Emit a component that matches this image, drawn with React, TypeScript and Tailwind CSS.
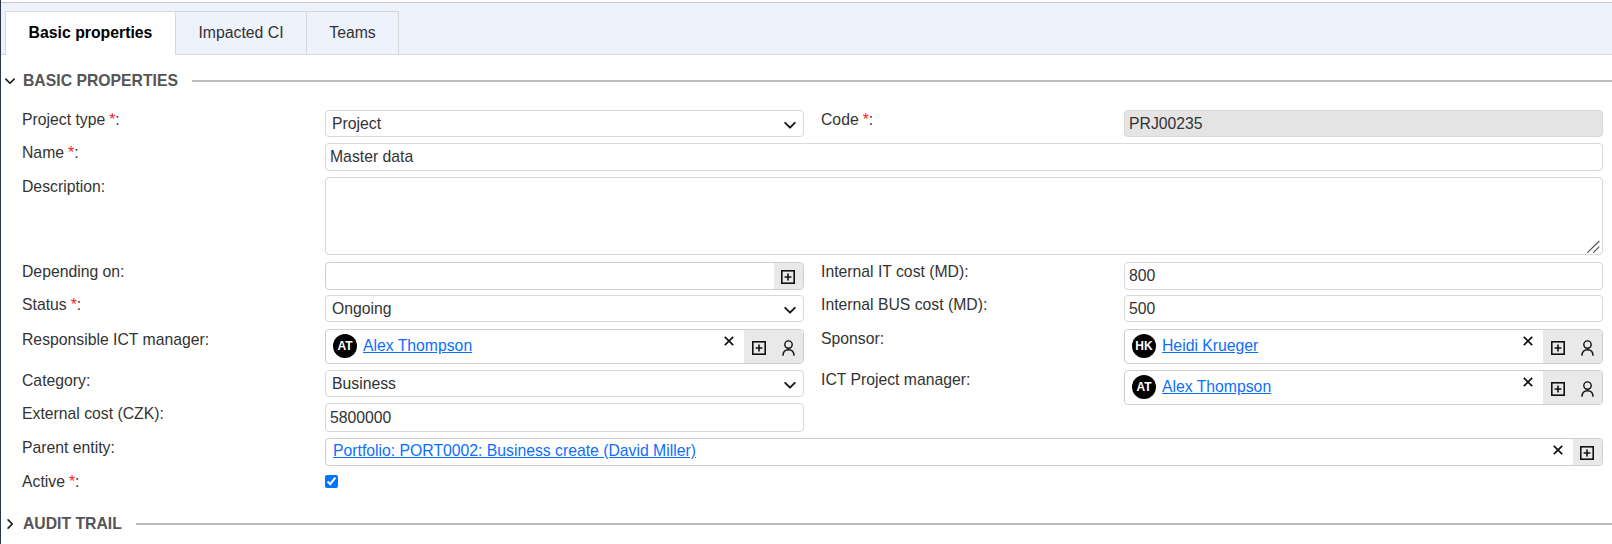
import React from "react";

const font = { fontFamily: '"Liberation Sans", Arial, sans-serif' };

function Chevron({ className = "", w = 2 }: { className?: string; w?: number }) {
  return (
    <svg viewBox="0 0 16 16" className={className} fill="none" stroke="#1a1a1a" strokeWidth={w} strokeLinecap="round" strokeLinejoin="round">
      <path d="M2.5 5.5 8 11l5.5-5.5" />
    </svg>
  );
}
function PlusBox() {
  return (
    <svg viewBox="0 0 14 14" width="14" height="14" fill="none" stroke="#111" strokeWidth="1.6">
      <rect x="0.8" y="0.8" width="12.4" height="12.4" />
      <path d="M7 3.6v6.8M3.6 7h6.8" />
    </svg>
  );
}
function Person() {
  return (
    <svg viewBox="0 0 13 16" width="13" height="16" fill="none" stroke="#111" strokeWidth="1.4">
      <circle cx="6.5" cy="4.6" r="3.7" />
      <path d="M1 15.8c0-3.8 2.2-6 5.5-6s5.5 2.2 5.5 6" />
    </svg>
  );
}
function Cross() {
  return (
    <svg viewBox="0 0 10 10" width="10" height="10" fill="none" stroke="#111" strokeWidth="1.7">
      <path d="M.8.8l8.4 8.4M9.2.8.8 9.2" />
    </svg>
  );
}
function Label({ text, req, className = "pt-[1px]" }: { text: string; req?: boolean; className?: string }) {
  return (
    <div className={`text-[15.75px] leading-[18px] text-[#333] ${className}`}>
      {text}
      {req && <span className="ml-[4px] text-[#ff2020]">*</span>}:
    </div>
  );
}
const base = "h-full w-full rounded-[4px] border border-[#d8d8d8] text-[15.75px] text-[#333] outline-none";

function Select({ value }: { value: string }) {
  return (
    <div className="relative h-[27px]">
      <select defaultValue={value} style={font} className={`${base} appearance-none bg-white pl-[6px]`}>
        <option>{value}</option>
      </select>
      <Chevron className="pointer-events-none absolute right-[7px] top-[8px] h-[14px] w-[14px]" w={2.2} />
    </div>
  );
}
function Input({ value, h = "h-[28px]", disabled }: { value: string; h?: string; disabled?: boolean }) {
  return (
    <div className={h}>
      <input readOnly value={value} style={font} className={`${base} px-[4px] ${disabled ? "bg-[#e4e4e4]" : "bg-white"}`} />
    </div>
  );
}
function PersonField({ initials, name }: { initials: string; name: string }) {
  return (
    <div className="flex h-[35px] overflow-hidden rounded-[4px] border border-[#cfcfcf] bg-white">
      <div className="flex min-w-0 flex-1 items-center pb-[2px] pl-[7px]">
        <span className="flex h-[24px] w-[24px] items-center justify-center rounded-full bg-black text-[12px] font-bold text-white">{initials}</span>
        <a href="#" className="ml-[6px] text-[15.75px] text-[#0d6efd] underline">{name}</a>
        <span className="ml-auto mb-[9px] mr-[10px] flex"><Cross /></span>
      </div>
      <div className="flex w-[59px] items-center justify-between bg-[#e9e9e9] pl-[8px] pr-[8px] pt-[2px]">
        <PlusBox />
        <Person />
      </div>
    </div>
  );
}
const cols = "grid grid-cols-[303px_479px_320px_479px] items-start";
function Row({ children, className = "" }: { children: React.ReactNode; className?: string }) {
  return <div className={`${cols} [&>*:nth-child(3)]:ml-[17px] ${className}`}>{children}</div>;
}
function Section({ title, open, className = "" }: { title: string; open?: boolean; className?: string }) {
  return (
    <div className={`flex items-center pl-[3px] ${className}`}>
      <Chevron className={`h-[12px] w-[12px] ${open ? "" : "-rotate-90"}`} w={2.2} />
      <span className="ml-[7px] text-[15.75px] font-bold text-[#555]">{title}</span>
      <div className="ml-[14px] h-[2px] flex-1 bg-[#bbb]" />
    </div>
  );
}

export default function App() {
  return (
    <div style={font} className="h-[544px] w-[1612px] overflow-hidden border-l border-[#2a3350] bg-white">
      <div className="h-[2px] bg-white" />
      <div className="h-[53px] border-t border-[#c8c8c8] bg-[#eef2fb]">
        <div className="flex h-[52px] border-b border-[#d8d8d8] pl-[4px] pt-[8px]">
          <div className="-mb-px flex h-[44px] w-[171px] items-center justify-center border-x border-t border-[#d8d8d8] bg-white pb-[1px] text-[15.8px] font-bold text-black">Basic properties</div>
          <div className="flex h-[43px] w-[131px] items-center justify-center border-r border-t border-[#d8d8d8] text-[15.8px] text-[#333]">Impacted CI</div>
          <div className="flex h-[43px] w-[92px] items-center justify-center border-r border-t border-[#d8d8d8] text-[15.8px] text-[#333]">Teams</div>
        </div>
      </div>
      <Section title="BASIC PROPERTIES" open className="mb-[4px] h-[51px]" />
      <div className="flex flex-col pl-[21px]">
        <Row className="mb-[6px]"><Label text="Project type" req /><Select value="Project" /><Label text="Code" req /><Input value="PRJ00235" h="h-[27px]" disabled /></Row>
        <Row className="mb-[6px]"><Label text="Name" req /><div className="col-span-3"><Input value="Master data" /></div></Row>
        <Row className="mb-[7px]">
          <Label text="Description" />
          <div className="relative col-span-3 h-[78px]">
            <textarea readOnly style={font} className={`${base} block resize-none bg-white`} />
            <svg viewBox="0 0 14 14" width="14" height="14" className="pointer-events-none absolute bottom-[2px] right-[2px]" fill="none" stroke="#555" strokeWidth="1.2">
              <path d="M.3 13.7 12.3 2M6.3 13.7l6-6" />
            </svg>
          </div>
        </Row>
        <Row className="mb-[5px]">
          <Label text="Depending on" />
          <div className="flex h-[28px] overflow-hidden rounded-[4px] border border-[#cfcfcf] bg-white">
            <div className="flex-1" />
            <div className="flex w-[29px] items-center justify-center bg-[#e9e9e9] pr-[1px] pt-[2px]"><PlusBox /></div>
          </div>
          <Label text="Internal IT cost (MD)" />
          <Input value="800" />
        </Row>
        <Row className="mb-[7px]"><Label text="Status" req /><Select value="Ongoing" /><Label text="Internal BUS cost (MD)" /><Input value="500" h="h-[27px]" /></Row>
        <Row className="mb-[6px]">
          <Label text="Responsible ICT manager" className="pt-[2px]" />
          <PersonField initials="AT" name="Alex Thompson" />
          <Label text="Sponsor" className="pt-[1px]" />
          <PersonField initials="HK" name="Heidi Krueger" />
        </Row>
        <div className={`${cols} mb-[6px]`}>
          <div className="flex flex-col">
            <div className="h-[34px]"><Label text="Category" className="pt-[2px]" /></div>
            <Label text="External cost (CZK)" />
          </div>
          <div className="flex flex-col gap-[6px]">
            <Select value="Business" />
            <Input value="5800000" h="h-[29px]" />
          </div>
          <div className="ml-[17px]"><Label text="ICT Project manager" /></div>
          <PersonField initials="AT" name="Alex Thompson" />
        </div>
        <Row className="mb-[9px]">
          <Label text="Parent entity" className="pt-[1px]" />
          <div className="col-span-3 flex h-[28px] overflow-hidden rounded-[4px] border border-[#cfcfcf] bg-white">
            <div className="flex flex-1 items-center pb-[2px] pl-[7px]">
              <a href="#" className="text-[15.75px] text-[#0d6efd] underline">Portfolio: PORT0002: Business create (David Miller)</a>
              <span className="ml-auto mb-[2px] mr-[10px] flex"><Cross /></span>
            </div>
            <div className="flex w-[29px] items-center justify-center bg-[#e9e9e9] pr-[1px] pt-[2px]"><PlusBox /></div>
          </div>
        </Row>
        <Row>
          <div className="-mt-[2px]"><Label text="Active" req className="" /></div>
          <div className="flex"><input type="checkbox" defaultChecked readOnly className="m-0 h-[13px] w-[13px]" /></div>
        </Row>
      </div>
      <Section title="AUDIT TRAIL" className="mt-[21px]" />
    </div>
  );
}
